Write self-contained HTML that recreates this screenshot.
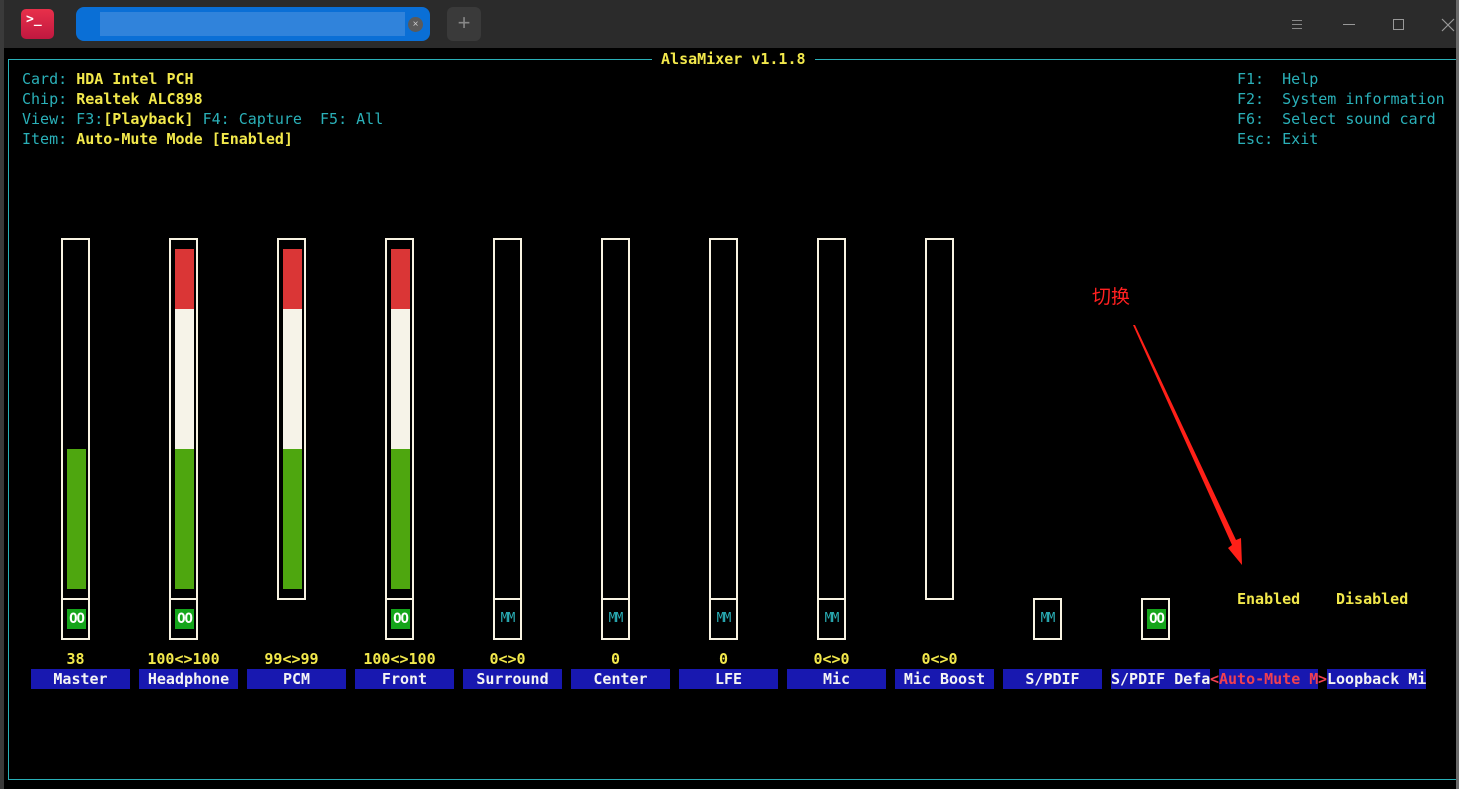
<!DOCTYPE html>
<html><head><meta charset="utf-8"><style>
*{margin:0;padding:0;box-sizing:border-box}
body{width:1459px;height:789px;background:#000;position:relative;overflow:hidden;font-family:"DejaVu Sans Mono","Liberation Mono",monospace;font-size:15px;line-height:20px}
.a{position:absolute;white-space:pre}
.c{color:#2ab0b8}
.y{color:#f2e84b;font-weight:bold}
.bar{position:absolute;top:238px;width:29px;height:362px;border:2px solid #f8f3e2;border-bottom:none}
.bar.e{height:362px;border-bottom:2px solid #f8f3e2}
.mb{position:absolute;top:598px;width:29px;height:42px;border:2px solid #f8f3e2}
.oo{position:absolute;left:4px;top:9px;width:19px;height:20px;background:#15a51a;color:#fff;font-weight:bold;font-size:14px;text-align:center;line-height:20px;letter-spacing:-1px}
.mm{position:absolute;left:0;top:9px;width:25px;text-align:center;color:#2ab0b8;font-size:13px;letter-spacing:-1px}
.f{position:absolute;left:4px;width:19px}
.lb{position:absolute;top:669px;height:20px;width:99px;background:#1818b0;color:#f4f4f4;font-weight:bold;text-align:center;white-space:pre;line-height:20px}
.v{position:absolute;top:649px;width:99px;text-align:center;color:#f2e84b;font-weight:bold}
</style></head><body>
<div style="position:absolute;left:0;top:0;width:1459px;height:48px;background:#2b2b2b"></div>
<div style="position:absolute;left:0;top:0;width:4px;height:789px;background:#3a3a3a"></div>
<div style="position:absolute;left:1456px;top:0;width:3px;height:789px;background:#6a6a6a"></div>
<div style="position:absolute;left:21px;top:9px;width:33px;height:30px;border-radius:5px;background:linear-gradient(#e8304a,#c01840);color:#fff;font-size:13px;line-height:14px;padding:4px 0 0 5px;font-weight:bold">&gt;_</div>
<div style="position:absolute;left:76px;top:7px;width:354px;height:34px;border-radius:8px;background:#0a6fd6"></div>
<div style="position:absolute;left:100px;top:12px;width:305px;height:24px;background:#3a88dc;opacity:.8"></div>
<div style="position:absolute;left:408px;top:17px;width:15px;height:15px;border-radius:50%;background:#5a5a5a;color:#ccc;font-size:10px;line-height:15px;text-align:center;font-family:'Liberation Sans'">×</div>
<div style="position:absolute;left:447px;top:7px;width:34px;height:34px;border-radius:6px;background:#3a3a3a;color:#888;font-size:22px;line-height:32px;text-align:center;font-family:'Liberation Sans'">+</div>
<div style="position:absolute;left:1292px;top:20px;width:10px;height:1px;background:#888;box-shadow:0 4px 0 #888,0 8px 0 #888"></div>
<div style="position:absolute;left:1343px;top:24px;width:12px;height:1px;background:#999"></div>
<div style="position:absolute;left:1393px;top:19px;width:11px;height:11px;border:1px solid #999"></div>
<svg style="position:absolute;left:1441px;top:18px" width="14" height="14"><path d="M1 1L13 13M13 1L1 13" stroke="#999" stroke-width="1.2"/></svg>

<div style="position:absolute;left:8px;top:59px;width:1448px;height:1px;background:#2ab0b8"></div>
<div style="position:absolute;left:8px;top:779px;width:1448px;height:1px;background:#2ab0b8"></div>
<div style="position:absolute;left:8px;top:59px;width:1px;height:721px;background:#2ab0b8"></div>
<div class="a y" style="left:652px;top:49px;background:#000">&nbsp;AlsaMixer v1.1.8&nbsp;</div>

<div class="a" style="left:22px;top:69px"><span class="c">Card: </span><span class="y">HDA Intel PCH</span></div>
<div class="a" style="left:22px;top:89px"><span class="c">Chip: </span><span class="y">Realtek ALC898</span></div>
<div class="a" style="left:22px;top:109px"><span class="c">View: F3:</span><span class="y">[Playback]</span><span class="c"> F4: Capture  F5: All</span></div>
<div class="a" style="left:22px;top:129px"><span class="c">Item: </span><span class="y">Auto-Mute Mode [Enabled]</span></div>
<div class="a c" style="left:1237px;top:69px">F1:  Help
F2:  System information
F6:  Select sound card
Esc: Exit</div>

<div class="bar" style="left:61px"><div class="f" style="top:209px;height:140px;background:#4ea60f"></div></div>
<div class="mb" style="left:61px"><div class="oo">OO</div></div>
<div class="bar" style="left:169px"><div class="f" style="top:9px;height:60px;background:#da3636"></div><div class="f" style="top:69px;height:140px;background:#f6f3e8"></div><div class="f" style="top:209px;height:140px;background:#4ea60f"></div></div>
<div class="mb" style="left:169px"><div class="oo">OO</div></div>
<div class="bar e" style="left:277px"><div class="f" style="top:9px;height:60px;background:#da3636"></div><div class="f" style="top:69px;height:140px;background:#f6f3e8"></div><div class="f" style="top:209px;height:140px;background:#4ea60f"></div></div>
<div class="bar" style="left:385px"><div class="f" style="top:9px;height:60px;background:#da3636"></div><div class="f" style="top:69px;height:140px;background:#f6f3e8"></div><div class="f" style="top:209px;height:140px;background:#4ea60f"></div></div>
<div class="mb" style="left:385px"><div class="oo">OO</div></div>
<div class="bar" style="left:493px"></div><div class="mb" style="left:493px"><div class="mm">MM</div></div>
<div class="bar" style="left:601px"></div><div class="mb" style="left:601px"><div class="mm">MM</div></div>
<div class="bar" style="left:709px"></div><div class="mb" style="left:709px"><div class="mm">MM</div></div>
<div class="bar" style="left:817px"></div><div class="mb" style="left:817px"><div class="mm">MM</div></div>
<div class="bar e" style="left:925px"></div>
<div class="mb" style="left:1033px"><div class="mm">MM</div></div>
<div class="mb" style="left:1141px"><div class="oo">OO</div></div>

<div class="v" style="left:26px">38</div>
<div class="v" style="left:134px">100&lt;&gt;100</div>
<div class="v" style="left:242px">99&lt;&gt;99</div>
<div class="v" style="left:350px">100&lt;&gt;100</div>
<div class="v" style="left:458px">0&lt;&gt;0</div>
<div class="v" style="left:566px">0</div>
<div class="v" style="left:674px">0</div>
<div class="v" style="left:782px">0&lt;&gt;0</div>
<div class="v" style="left:890px">0&lt;&gt;0</div>

<div class="a y" style="left:1237px;top:589px">Enabled</div>
<div class="a y" style="left:1336px;top:589px">Disabled</div>

<div class="lb" style="left:31px">Master</div>
<div class="lb" style="left:139px">Headphone</div>
<div class="lb" style="left:247px">PCM</div>
<div class="lb" style="left:355px">Front</div>
<div class="lb" style="left:463px">Surround</div>
<div class="lb" style="left:571px">Center</div>
<div class="lb" style="left:679px">LFE</div>
<div class="lb" style="left:787px">Mic</div>
<div class="lb" style="left:895px">Mic Boost</div>
<div class="lb" style="left:1003px">S/PDIF</div>
<div class="lb" style="left:1111px">S/PDIF Defa</div>
<div class="a" style="left:1210px;top:669px;color:#f04050;font-weight:bold">&lt;</div>
<div class="lb" style="left:1219px;color:#f04050">Auto-Mute M</div>
<div class="a" style="left:1318px;top:669px;color:#f04050;font-weight:bold">&gt;</div>
<div class="lb" style="left:1327px">Loopback Mi</div>

<div class="a" style="left:1092px;top:284px;color:#ff2020;font-family:'Noto Sans CJK SC',sans-serif;font-size:19px;line-height:24px">切换</div>
<svg style="position:absolute;left:0;top:0" width="1459" height="789"><polygon points="1133,325 1135,325 1236,540 1241,538 1242,565 1228,548 1232,545" fill="#ff2018"/></svg>
</body></html>
